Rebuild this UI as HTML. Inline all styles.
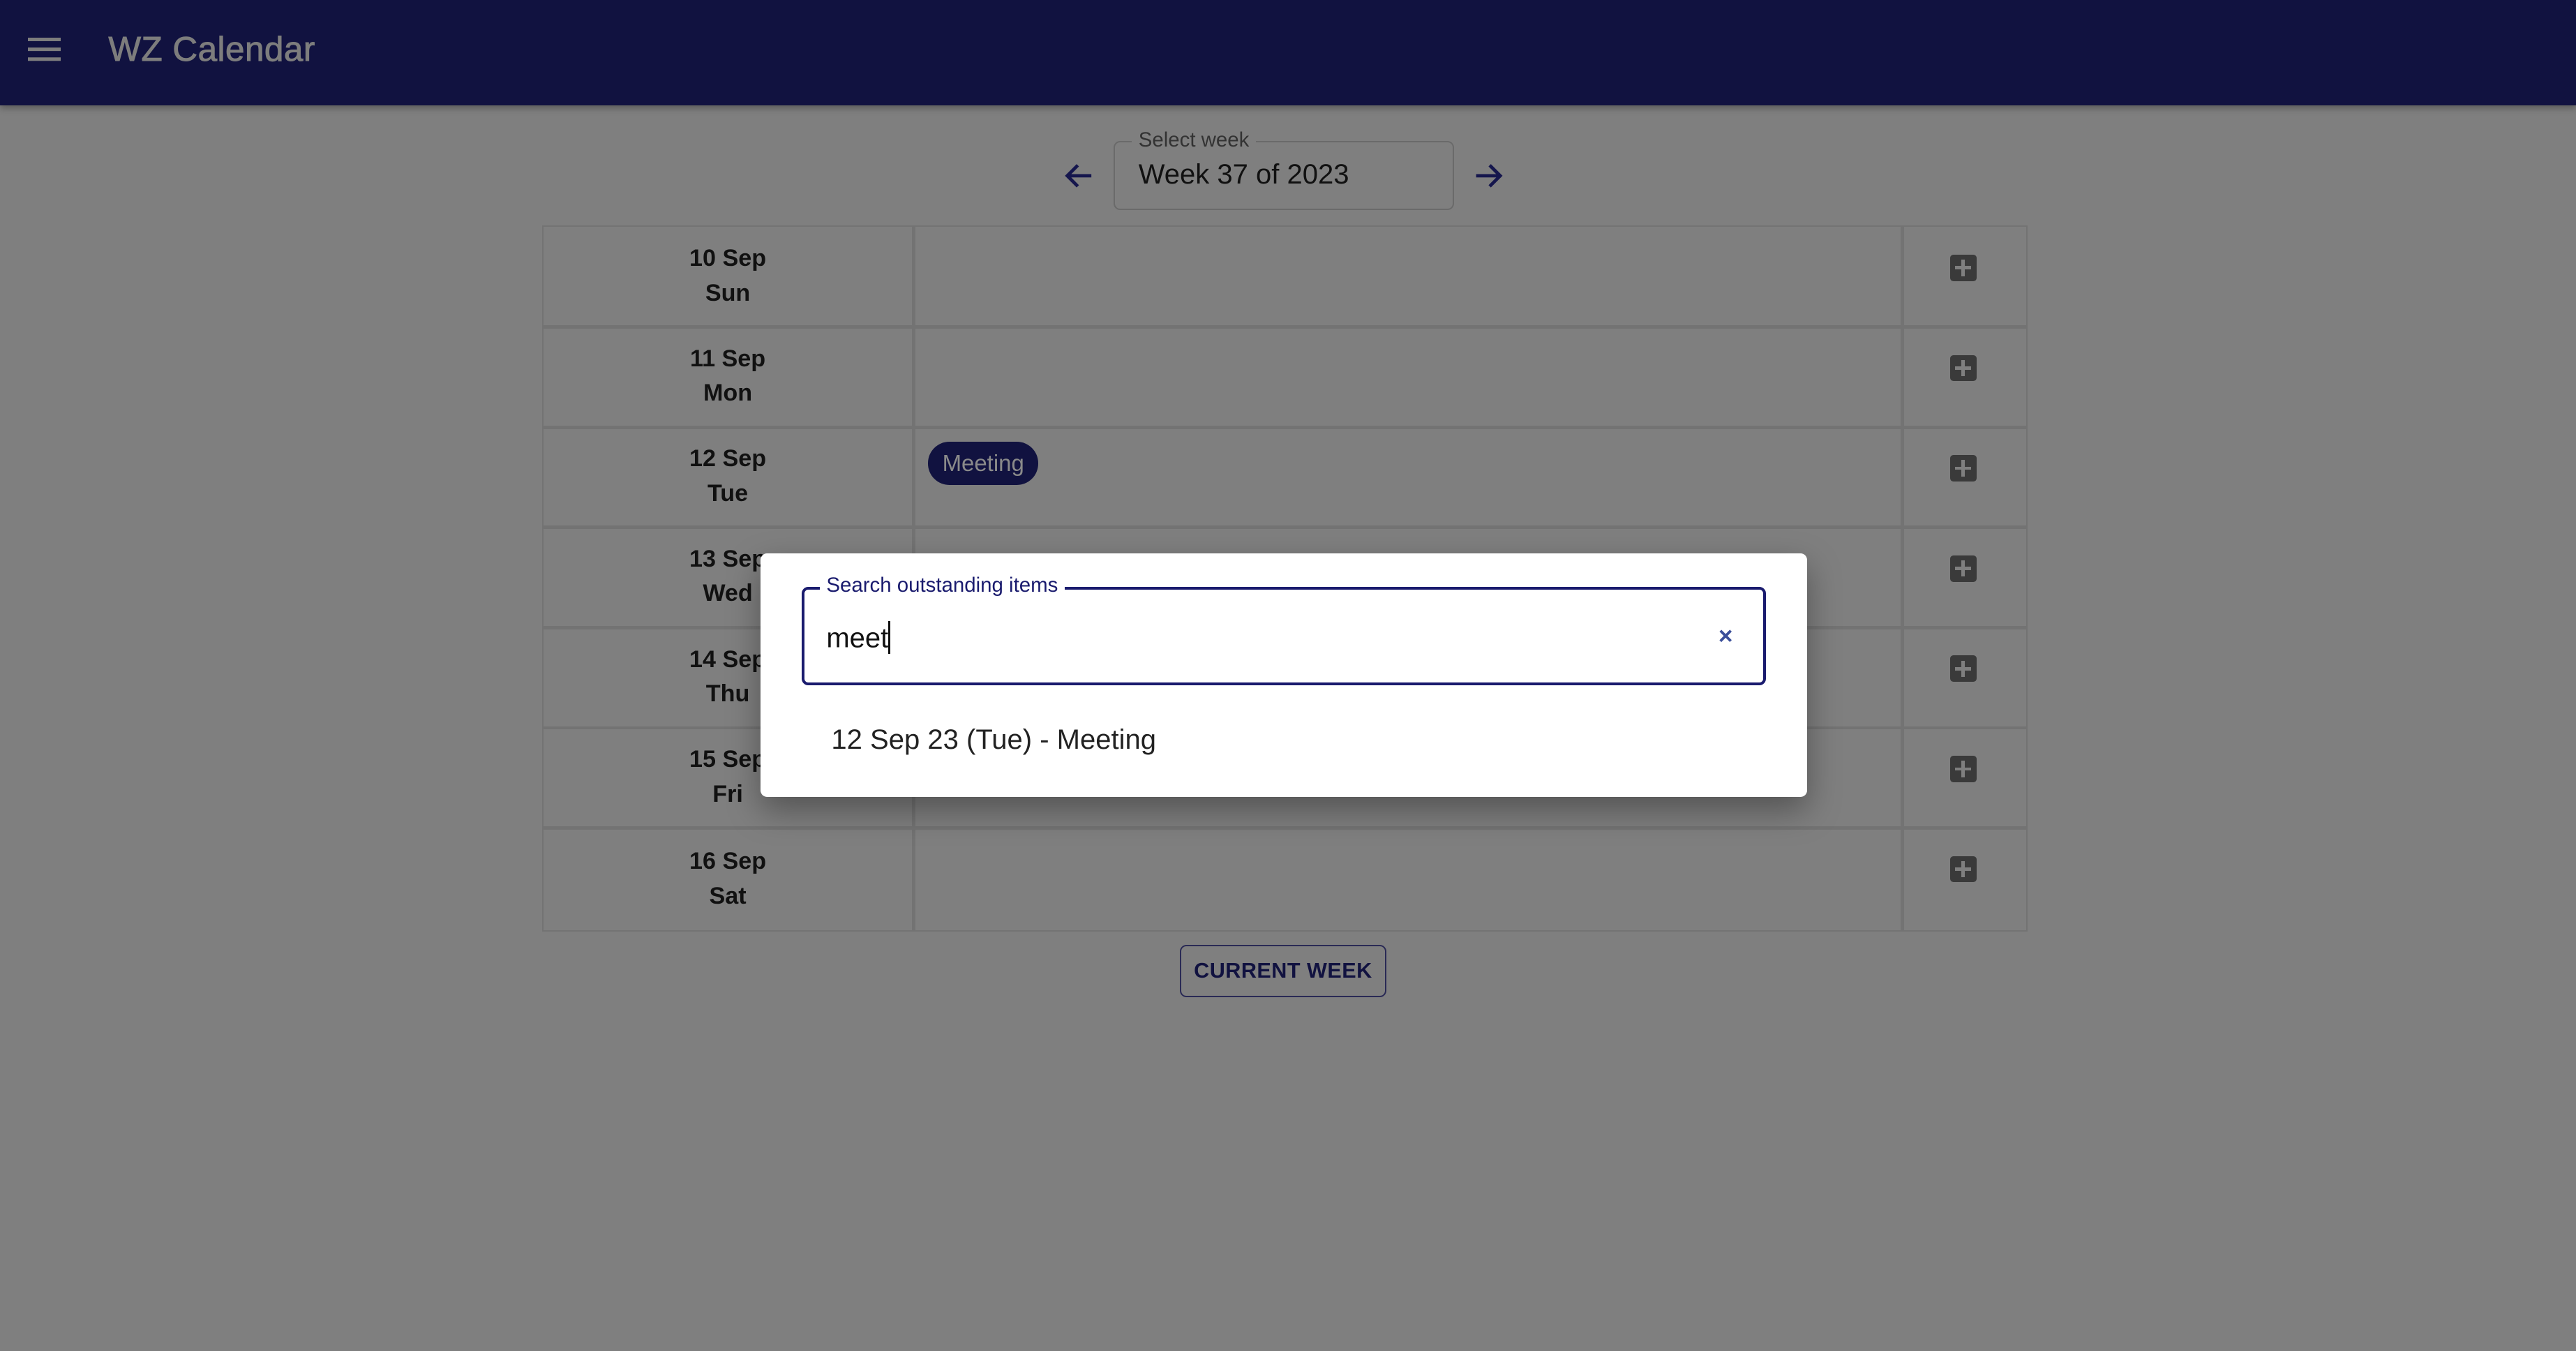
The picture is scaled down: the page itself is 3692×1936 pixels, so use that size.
<!DOCTYPE html>
<html><head><meta charset="utf-8"><style>
html,body{margin:0;padding:0;}
body{width:3692px;height:1936px;overflow:hidden;background:#7f7f7f;font-family:"Liberation Sans",sans-serif;}
#z{zoom:2.35459;width:1568px;height:822.3px;position:relative;}
.a{position:absolute;}
.bar{left:0;top:0;width:1568px;height:64px;background:#111240;box-shadow:0 2px 4px rgba(0,0,0,.3);}
.cell{position:absolute;border:1px solid #737373;box-sizing:border-box;}
.day{font-size:14.5px;font-weight:bold;color:#111;text-align:center;line-height:21px;}
.plus{position:absolute;width:16px;height:16px;background:#3a3a3a;border-radius:2px;}
.plus:before{content:"";position:absolute;left:3px;top:7px;width:10px;height:2px;background:#7f7f7f;}
.plus:after{content:"";position:absolute;left:7px;top:3px;width:2px;height:10px;background:#7f7f7f;}
</style></head><body><div id="z">
<div class="a bar"></div>
<div class="a" style="left:17px;top:23px;width:20px;height:2.2px;background:#7d7d7d;box-shadow:0 6px 0 #7d7d7d,0 12px 0 #7d7d7d;"></div>
<div class="a" style="left:66px;top:18px;font-size:21px;color:#7d7d7d;letter-spacing:.2px;-webkit-text-stroke:0.4px #7d7d7d;">WZ Calendar</div>

<svg class="a" style="left:646px;top:96px" width="22" height="22" viewBox="0 0 24 24"><path d="M20 12H5M11 5l-7 7 7 7" stroke="#15164d" stroke-width="2.2" fill="none"/></svg>
<svg class="a" style="left:895px;top:96px" width="22" height="22" viewBox="0 0 24 24"><path d="M4 12h15M13 5l7 7-7 7" stroke="#15164d" stroke-width="2.2" fill="none"/></svg>
<div class="a" style="left:678px;top:86px;width:207px;height:42px;border:1px solid #6a6a6a;border-radius:4px;box-sizing:border-box;"></div>
<div class="a" style="left:689px;top:78px;padding:0 4px;background:#7f7f7f;font-size:12.5px;color:#333;">Select week</div>
<div class="a" style="left:693px;top:97px;font-size:17px;color:#111;">Week 37 of 2023</div>

<div class="cell" style="left:330px;top:137px;width:904px;height:430px;"></div>
<div class="a" style="left:555px;top:137px;width:2px;height:430px;background:#737373"></div>
<div class="a" style="left:1157px;top:137px;width:2px;height:430px;background:#737373"></div>
<div class="a" style="left:330px;top:198px;width:904px;height:2px;background:#737373"></div>
<div class="a" style="left:330px;top:259px;width:904px;height:2px;background:#737373"></div>
<div class="a" style="left:330px;top:320px;width:904px;height:2px;background:#737373"></div>
<div class="a" style="left:330px;top:381px;width:904px;height:2px;background:#737373"></div>
<div class="a" style="left:330px;top:442px;width:904px;height:2px;background:#737373"></div>
<div class="a" style="left:330px;top:503px;width:904px;height:2px;background:#737373"></div>

<div class="a day" style="left:330px;width:226px;top:147px">10 Sep<br>Sun</div>
<div class="a day" style="left:330px;width:226px;top:208px">11 Sep<br>Mon</div>
<div class="a day" style="left:330px;width:226px;top:269px">12 Sep<br>Tue</div>
<div class="a day" style="left:330px;width:226px;top:330px">13 Sep<br>Wed</div>
<div class="a day" style="left:330px;width:226px;top:391px">14 Sep<br>Thu</div>
<div class="a day" style="left:330px;width:226px;top:452px">15 Sep<br>Fri</div>
<div class="a day" style="left:330px;width:226px;top:514px">16 Sep<br>Sat</div>

<div class="a" style="left:565px;top:269px;height:26px;width:67px;border-radius:13px;background:#111240;color:#8a8a8a;font-size:14px;line-height:26px;text-align:center;">Meeting</div>

<div class="plus" style="left:1187px;top:155px"></div>
<div class="plus" style="left:1187px;top:216px"></div>
<div class="plus" style="left:1187px;top:277px"></div>
<div class="plus" style="left:1187px;top:338px"></div>
<div class="plus" style="left:1187px;top:399px"></div>
<div class="plus" style="left:1187px;top:460px"></div>
<div class="plus" style="left:1187px;top:521px"></div>

<div class="a" style="left:718px;top:575px;width:126px;height:32px;border:1px solid #2a2a55;border-radius:4px;box-sizing:border-box;font-size:13px;font-weight:bold;color:#111240;text-align:center;line-height:30px;letter-spacing:.2px;">CURRENT WEEK</div>

<div class="a" style="left:463px;top:337px;width:637px;height:148px;background:#fff;border-radius:4px;box-shadow:0 8px 20px rgba(0,0,0,.35);"></div>
<div class="a" style="left:488px;top:357px;width:587px;height:60px;border:2px solid #1a1b6e;border-radius:4px;box-sizing:border-box;"></div>
<div class="a" style="left:499px;top:349px;padding:0 4px;background:#fff;font-size:12.5px;color:#1a1b6e;">Search outstanding items</div>
<div class="a" style="left:503px;top:378px;font-size:17px;color:#111;">meet<span style="display:inline-block;width:1px;height:20px;background:#111;vertical-align:-4px"></span></div>
<div class="a" style="left:1046px;top:379px;font-size:15px;font-weight:bold;color:#3b4f9a;">×</div>
<div class="a" style="left:506px;top:441px;font-size:17px;color:#222;">12 Sep 23 (Tue) - Meeting</div>
</div></body></html>
